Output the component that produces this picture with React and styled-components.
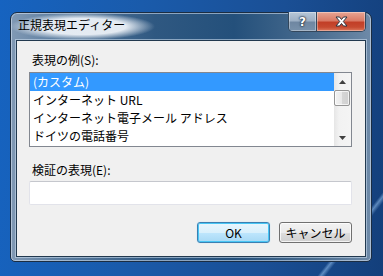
import React from 'react'
import styled, { createGlobalStyle } from 'styled-components'

const GlobalStyle = createGlobalStyle`
    html, body {
        margin: 0;
        padding: 0;
    }
    body {
        width: 383px;
        height: 276px;
        overflow: hidden;
        font-family: "Noto Sans CJK JP", "Noto Sans", sans-serif;
        font-size: 12px;
        color: #000;
    }
`

const Desktop = styled.div`
    width: 383px;
    height: 276px;
    box-sizing: border-box;
    padding: 12px 11px 14px 10px;
    background:
        linear-gradient(128deg, transparent 0 89%, rgba(150, 195, 240, 0.55) 89.6%, transparent 90.4%),
        linear-gradient(95deg, #1663c0 0%, #1a5bab 35%, #1a4f95 70%, #133f7b 100%);
`

const Window = styled.div`
    height: 100%;
    box-sizing: border-box;
    display: flex;
    flex-direction: column;
    padding: 0 5px 4px 5px;
    border: 1px solid #1b2d42;
    border-radius: 7px 7px 5px 5px;
    background: linear-gradient(90deg, #8199b4 0%, #5e7fa1 12%, #2f5881 40%, #24507b 62%, #4a6d90 85%, #6e8aa8 100%);
    box-shadow: inset 0 0 0 1px rgba(220, 232, 245, 0.55);
`

const TitleBar = styled.div`
    height: 27px;
    display: flex;
    align-items: flex-start;
    justify-content: space-between;
`

const Title = styled.span`
    height: 27px;
    box-sizing: border-box;
    margin-left: -6px;
    padding: 4px 30px 0 8px;
    line-height: 16px;
    font-size: 12px;
    white-space: nowrap;
    background: radial-gradient(closest-side, rgba(236, 241, 247, 0.95) 60%, rgba(236, 241, 247, 0) 100%);
`

const CaptionButtons = styled.div`
    display: flex;
    margin-top: -1px;
    height: 19px;
    border: 1px solid #33475c;
    border-top: none;
    border-radius: 0 0 5px 5px;
    overflow: hidden;
`

const CaptionButton = styled.div`
    width: ${props => props.$w}px;
    height: 100%;
    display: flex;
    align-items: center;
    justify-content: center;
    color: #fff;
    font-family: "DejaVu Sans", sans-serif;
    font-weight: bold;
    font-size: 12px;
    text-shadow: 0 0 1px #1d2c3c, 0 0 2px #1d2c3c, 0 0 2px #1d2c3c;
    background: ${props => props.$close
        ? 'linear-gradient(180deg, #e7a594 0%, #d97b66 45%, #c23f27 55%, #c64a30 80%, #dd7a5e 100%)'
        : 'linear-gradient(180deg, #b7c7d8 0%, #9db0c5 45%, #6f87a2 55%, #7891ab 100%)'};
    box-shadow: inset 0 0 0 1px rgba(255, 255, 255, 0.35);
    & + & {
        border-left: 1px solid #33475c;
    }
`

const Client = styled.div`
    flex: 1;
    display: flex;
    flex-direction: column;
    padding: 0 13px 0 12px;
    background: #f0f0f0;
    border: 1px solid #22394f;
    box-shadow: 0 0 0 1px rgba(200, 218, 236, 0.6);
`

const Label = styled.div`
    height: 16px;
    line-height: 16px;
    padding-left: 3px;
    margin-top: ${props => props.$top}px;
`

const ListBox = styled.div`
    width: 323px;
    height: 75px;
    box-sizing: border-box;
    margin-top: 4px;
    display: flex;
    border: 1px solid #828790;
    background: #fff;
`

const Items = styled.div`
    flex: 1;
    overflow: hidden;
`

const Item = styled.div`
    height: 18px;
    line-height: 18px;
    padding-left: 3px;
    white-space: nowrap;
    background: ${props => props.$selected ? '#3399ff' : 'transparent'};
    color: ${props => props.$selected ? '#fff' : '#000'};
`

const ScrollBar = styled.div`
    width: 17px;
    display: flex;
    flex-direction: column;
    background: linear-gradient(90deg, #e6e6e6 0%, #f2f2f2 30%, #f4f4f4 100%);
`

const Arrow = styled.div`
    height: 17px;
    display: flex;
    align-items: center;
    justify-content: center;
`

const Thumb = styled.div`
    height: 16px;
    margin: 0 1px 0 0;
    box-sizing: border-box;
    border: 1px solid #959595;
    border-radius: 2px;
    background: linear-gradient(90deg, #f3f3f3 0%, #e8e8e8 50%, #d6d6d6 51%, #d0d0d0 100%);
    box-shadow: inset 0 0 0 1px rgba(255, 255, 255, 0.7);
`

const Track = styled.div`
    flex: 1;
`

const TextBox = styled.div`
    width: 323px;
    height: 24px;
    box-sizing: border-box;
    margin-top: 3px;
    background: #fff;
    border: 1px solid #e2e3ea;
    border-top-color: #c5c7cd;
    border-radius: 2px;
`

const ButtonRow = styled.div`
    display: flex;
    justify-content: flex-end;
    gap: 9px;
    margin-top: 17px;
`

const Button = styled.div`
    width: 73px;
    height: 21px;
    box-sizing: border-box;
    display: flex;
    align-items: center;
    justify-content: center;
    border-radius: 3px;
    font-size: 12px;
    border: 1px solid ${props => props.$default ? '#3c7fb1' : '#707070'};
    background: ${props => props.$default
        ? 'linear-gradient(180deg, #eaf6fd 0%, #d9f0fc 50%, #bee6fd 51%, #a7d9f5 100%)'
        : 'linear-gradient(180deg, #f2f2f2 0%, #ebebeb 50%, #dddddd 51%, #cfcfcf 100%)'};
    box-shadow: ${props => props.$default
        ? 'inset 0 0 0 1px #48c6f5, 0 0 1px #8fd3f7'
        : 'inset 0 0 0 1px rgba(255, 255, 255, 0.75)'};
`

const UpArrow = () => (
    <svg width="7" height="4" viewBox="0 0 7 4">
        <path d="M0 4 L3.5 0 L7 4 Z" fill="#404040" />
    </svg>
)

const DownArrow = () => (
    <svg width="7" height="4" viewBox="0 0 7 4">
        <path d="M0 0 L7 0 L3.5 4 Z" fill="#404040" />
    </svg>
)

const CloseGlyph = () => (
    <svg width="13" height="11" viewBox="0 0 13 11">
        <path
            d="M1 1 H4.5 L6.5 3.5 L8.5 1 H12 L8.3 5.5 L12 10 H8.5 L6.5 7.5 L4.5 10 H1 L4.7 5.5 Z"
            fill="#fff"
            stroke="#2b3440"
            strokeWidth="1"
            strokeLinejoin="round"
        />
    </svg>
)

const items = [
    '(カスタム)',
    'インターネット URL',
    'インターネット電子メール アドレス',
    'ドイツの電話番号',
]

const App = () => {
    return (
        <Desktop>
            <GlobalStyle />
            <Window>
                <TitleBar>
                    <Title>正規表現エディター</Title>
                    <CaptionButtons>
                        <CaptionButton $w={27}>?</CaptionButton>
                        <CaptionButton $w={48} $close><CloseGlyph /></CaptionButton>
                    </CaptionButtons>
                </TitleBar>
                <Client>
                    <Label $top={11}>表現の例(S):</Label>
                    <ListBox>
                        <Items>
                            {items.map((item, i) => (
                                <Item key={item} $selected={i === 0}>{item}</Item>
                            ))}
                        </Items>
                        <ScrollBar>
                            <Arrow><UpArrow /></Arrow>
                            <Thumb />
                            <Track />
                            <Arrow><DownArrow /></Arrow>
                        </ScrollBar>
                    </ListBox>
                    <Label $top={15}>検証の表現(E):</Label>
                    <TextBox />
                    <ButtonRow>
                        <Button $default>OK</Button>
                        <Button>キャンセル</Button>
                    </ButtonRow>
                </Client>
            </Window>
        </Desktop>
    )
}

export default App
